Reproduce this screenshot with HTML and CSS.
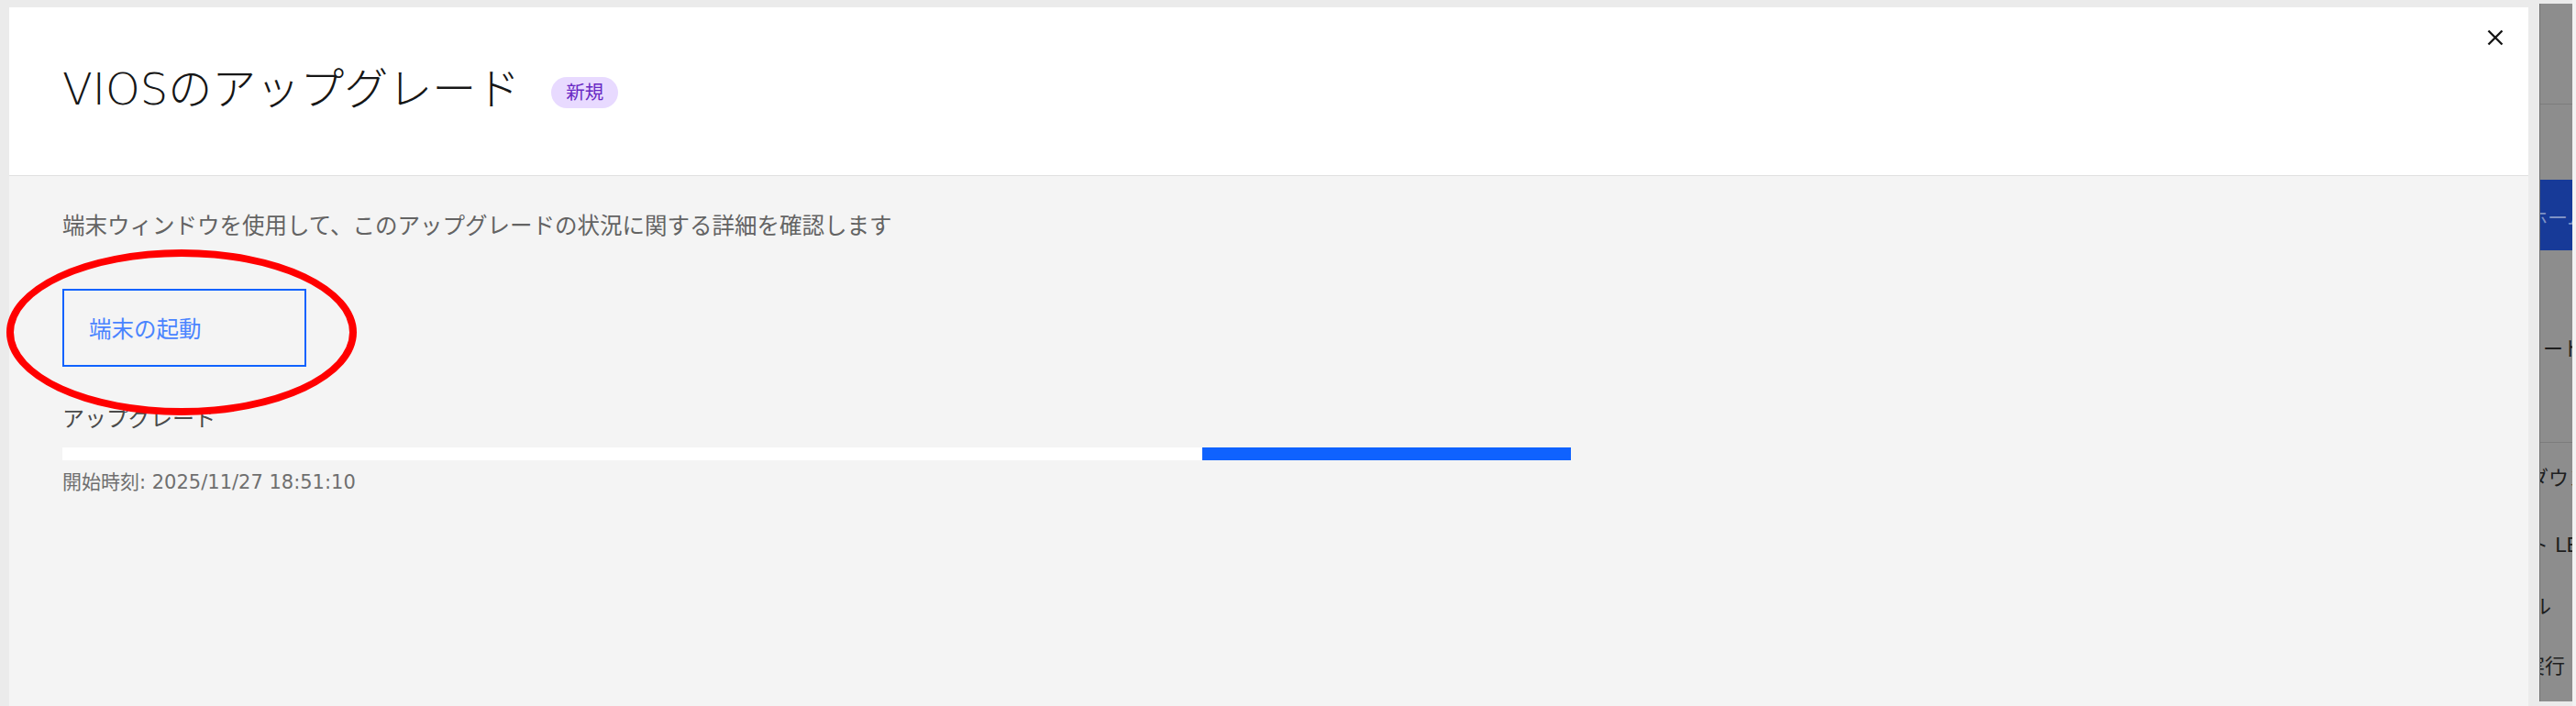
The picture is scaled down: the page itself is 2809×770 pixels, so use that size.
FILE: index.html
```html
<!DOCTYPE html>
<html lang="ja">
<head>
<meta charset="utf-8">
<title>VIOSのアップグレード</title>
<link rel="stylesheet" href="styles.css">
</head>
<body>
<div class="screen">
  <div class="stage">
    <section class="modal">
      <header class="modal-header">
        <div class="title-row">
          <h2 class="title">VIOSのアップグレード</h2>
          <span class="tag">新規</span>
        </div>
        <button class="close" aria-label="閉じる">
          <svg viewBox="0 0 18 18" width="18" height="18"><path d="M1.5 1.5 L16.5 16.5 M16.5 1.5 L1.5 16.5" stroke="#161616" stroke-width="2.4" fill="none"/></svg>
        </button>
      </header>
      <div class="modal-body">
        <p class="desc">端末ウィンドウを使用して、このアップグレードの状況に関する詳細を確認します</p>
        <button class="btn-tertiary">端末の起動</button>
        <div class="label">アップグレード</div>
        <div class="track"><div class="bar" style="width:402px"></div></div>
        <div class="meta">開始時刻: 2025/11/27 18:51:10</div>
        <div class="annotation"></div>
      </div>
    </section>
  </div>
  <aside class="backdrop-page">
    <div class="bp-top"></div>
    <div class="bp-gap"></div>
    <div class="bp-item bp-active"><span class="s-home">ホーム</span></div>
    <div class="bp-item bp-tall"><span class="s-mode">ード</span></div>
    <div class="bp-item h72"><span class="s-down">ダウン</span></div>
    <div class="bp-item h74"><span class="s-led">テスト LED</span></div>
    <div class="bp-item h60"><span class="s-ru">ル</span></div>
    <div class="bp-item h70"><span class="s-exec">実行</span></div>
  </aside>
  <div class="edge"></div>
</div>
</body>
</html>
```

FILE: styles.css
```css
html, body {
  margin: 0;
  padding: 0;
}
body {
  background: #ebebeb;
  font-family: "DejaVu Sans", "Noto Sans CJK JP", sans-serif;
  overflow: hidden;
}
.screen {
  display: flex;
  width: 2809px;
  height: 770px;
}
.stage {
  width: 2769px;
  box-sizing: border-box;
  padding: 8px 12px 0 10px;
  display: flex;
}
.modal {
  flex: 1;
  display: flex;
  flex-direction: column;
  background: #f4f4f4;
}
.modal-header {
  position: relative;
  height: 184px;
  box-sizing: border-box;
  background: #ffffff;
  border-bottom: 1px solid #e0e0e0;
  padding: 60px 58px 0;
}
.title-row {
  display: flex;
  align-items: flex-start;
  gap: 34px;
}
.title {
  margin: 0;
  font-size: 48px;
  line-height: 58px;
  font-weight: 300;
  color: #161616;
}
.tag {
  margin-top: 16px;
  height: 34px;
  padding: 0 16px;
  border-radius: 17px;
  background: #e8daff;
  color: #6929c4;
  font-size: 20.5px;
  line-height: 34px;
}
.close {
  position: absolute;
  top: 24px;
  right: 27px;
  width: 18px;
  height: 18px;
  padding: 0;
  border: 0;
  background: none;
  display: flex;
}
.modal-body {
  position: relative;
  flex: 1;
  padding: 37px 58px 0;
}
.desc {
  margin: 0;
  font-size: 24.5px;
  line-height: 35px;
  color: #636363;
}
.btn-tertiary {
  margin-top: 51px;
  width: 266px;
  height: 85px;
  box-sizing: border-box;
  border: 2px solid #0f62fe;
  background: transparent;
  color: #4a84ff;
  font-family: inherit;
  font-size: 24.5px;
  padding: 0 0 0 27px;
  display: flex;
  align-items: center;
}
.label {
  margin-top: 42px;
  font-size: 24px;
  line-height: 30px;
  color: #4a4a4a;
}
.track {
  margin-top: 16px;
  width: 1645px;
  height: 14px;
  background: #ffffff;
  display: flex;
  justify-content: flex-end;
}
.bar {
  height: 100%;
  background: #0f62fe;
}
.meta {
  margin-top: 10px;
  font-size: 21px;
  line-height: 28px;
  color: #6f6f6f;
}
.annotation {
  position: absolute;
  left: -3px;
  top: 80px;
  width: 382px;
  height: 181px;
  box-sizing: border-box;
  border: 8px solid #ff0000;
  border-radius: 50%;
}
.backdrop-page {
  width: 36px;
  box-sizing: border-box;
  margin-top: 4px;
  height: 761px;
  background: #8d8d8d;
  border-left: 1px solid #707070;
  overflow: hidden;
  display: flex;
  flex-direction: column;
  font-size: 22px;
  color: #1e1e1e;
}
.bp-top {
  height: 109px;
  flex: none;
  border-bottom: 1px solid #7c7c7c;
}
.bp-gap {
  height: 82px;
  flex: none;
}
.bp-item {
  flex: none;
  display: flex;
  align-items: center;
  white-space: nowrap;
}
.bp-active {
  height: 77px;
  background: #173a98;
  color: #7f93c6;
}
.bp-tall {
  height: 210px;
  box-sizing: border-box;
  border-bottom: 1px solid #7c7c7c;
}
.h72 { height: 72px; }
.h74 { height: 74px; }
.h60 { height: 60px; }
.h70 { height: 70px; }
.s-home { margin-left: -14px; }
.s-mode { margin-left: 3px; }
.s-down { margin-left: -13px; }
.s-led { margin-left: -57px; }
.s-ru { margin-left: -10px; }
.s-exec { margin-left: -17px; }
.edge {
  flex: 1;
  background: #f2f2f2;
}
```
